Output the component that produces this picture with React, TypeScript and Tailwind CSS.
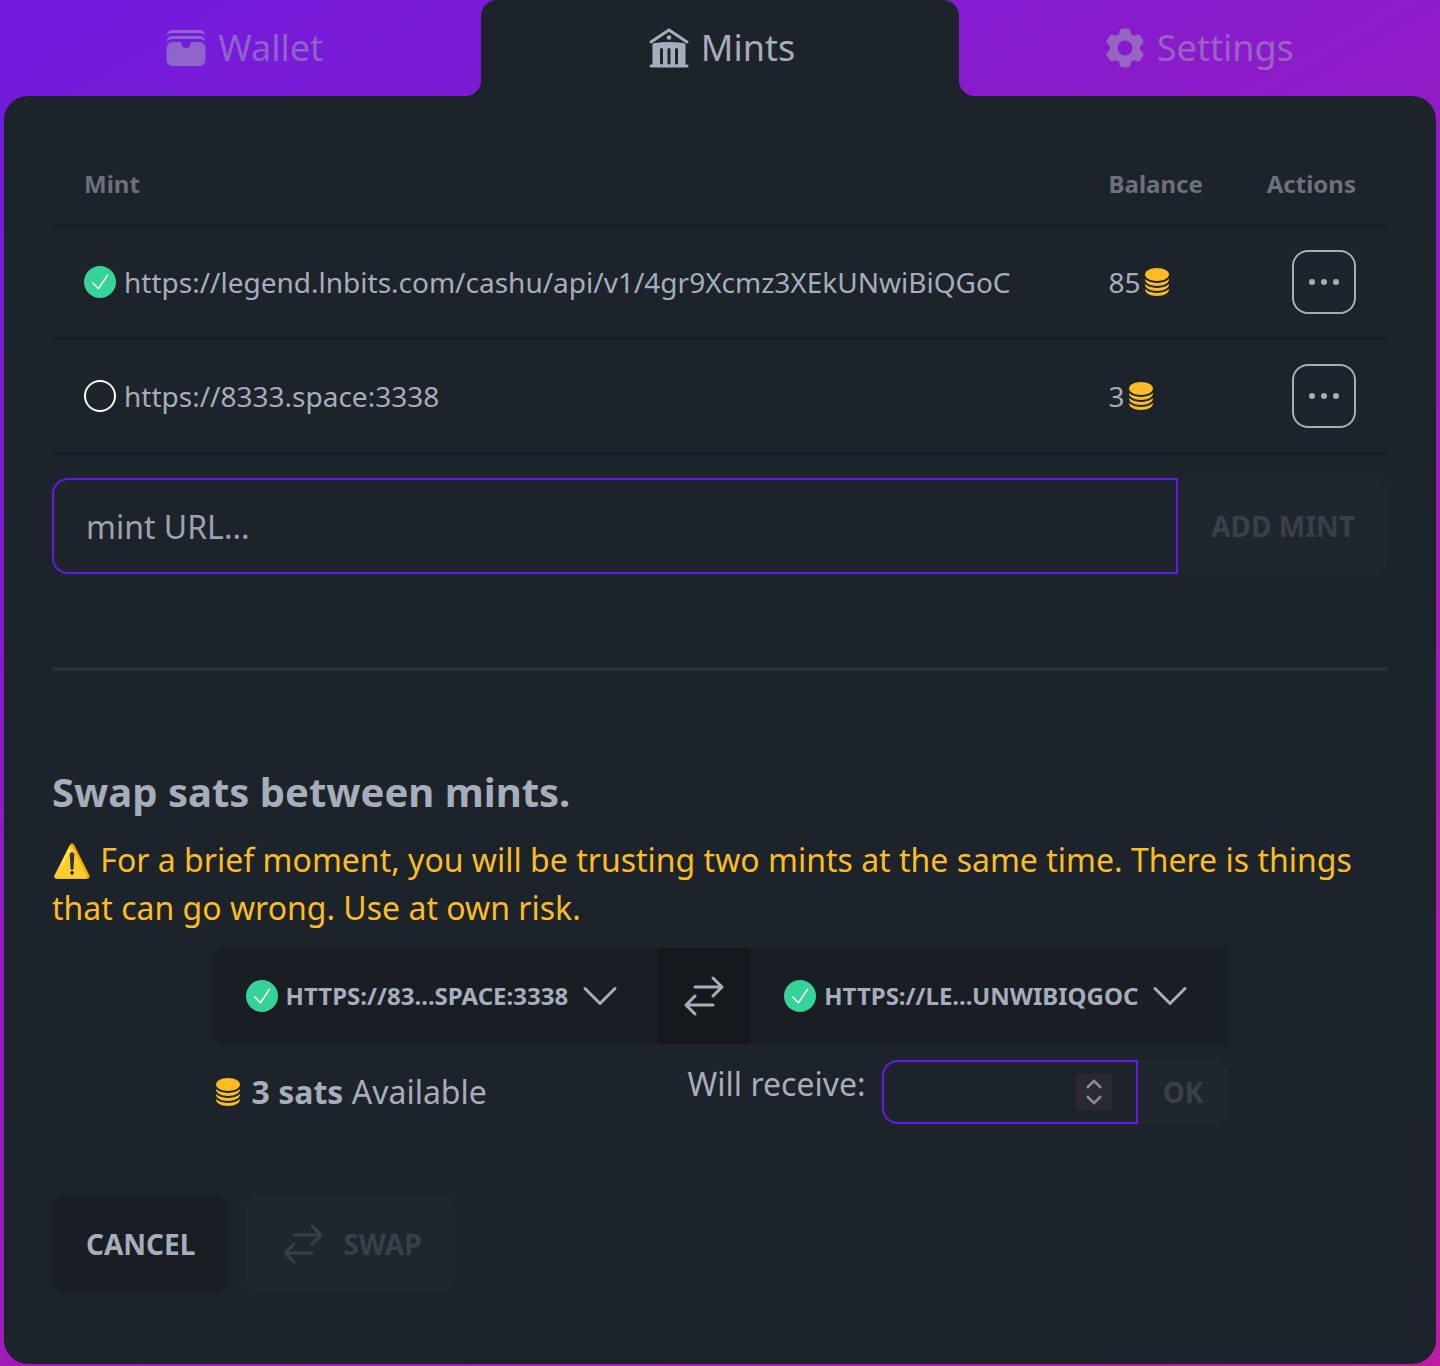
import { useState } from "react";
import {
  HiBuildingLibrary,
  HiCircleStack,
  HiCog6Tooth,
  HiOutlineArrowsRightLeft,
  HiOutlineCheck,
  HiOutlineChevronDown,
  HiOutlineChevronUp,
  HiOutlineEllipsisHorizontal,
  HiWallet,
} from "react-icons/hi2";

interface Mint {
  url: string;
  balance: number;
  active: boolean;
}

const mints: Mint[] = [
  { url: "https://legend.lnbits.com/cashu/api/v1/4gr9Xcmz3XEkUNwiBiQGoC", balance: 85, active: true },
  { url: "https://8333.space:3338", balance: 3, active: false },
];

const tabs = [
  { name: "Wallet", Icon: HiWallet },
  { name: "Mints", Icon: HiBuildingLibrary },
  { name: "Settings", Icon: HiCog6Tooth },
];

function StatusDot({ active }: { active: boolean }) {
  if (!active) {
    return <span className="size-8 shrink-0 rounded-full border-2 border-white" />;
  }
  return (
    <span className="flex size-8 shrink-0 items-center justify-center rounded-full bg-[#36d399] text-white">
      <HiOutlineCheck className="size-6" />
    </span>
  );
}

function MintSelect({ label, className }: { label: string; className: string }) {
  return (
    <button
      type="button"
      className={`flex h-24 items-center gap-2 bg-[#191d24] px-[34px] text-2xl font-bold uppercase ${className}`}
    >
      <StatusDot active />
      {label}
      <HiOutlineChevronDown className="size-12" />
    </button>
  );
}

function Tabs() {
  return (
    <nav className="grid grid-cols-3">
      {tabs.map(({ name, Icon }) => {
        const active = name === "Mints";
        return (
          <a
            key={name}
            href={`#${name.toLowerCase()}`}
            className={`relative flex h-24 items-center justify-center gap-2 text-4xl ${
              active ? "rounded-t-2xl bg-[#1d232a]" : "text-[#a6adbb]/50"
            }`}
          >
            {active && (
              <>
                <span className="absolute bottom-0 -left-4 size-4 bg-[radial-gradient(circle_at_0_0,transparent_16px,#1d232a_16px)]" />
                <span className="absolute bottom-0 -right-4 size-4 bg-[radial-gradient(circle_at_100%_0,transparent_16px,#1d232a_16px)]" />
              </>
            )}
            <Icon className="size-12" />
            {name}
          </a>
        );
      })}
    </nav>
  );
}

function MintTable() {
  return (
    <table className="w-full border-separate border-spacing-0 text-left text-[28px] leading-10">
      <thead>
        <tr className="text-2xl text-[#6b717d] *:border-b-2 *:border-[#191d24]">
          <th className="h-[82px] px-8">Mint</th>
          <th className="px-8">Balance</th>
          <th className="w-px px-8">Actions</th>
        </tr>
      </thead>
      <tbody>
        {mints.map((mint) => (
          <tr key={mint.url} className="*:border-b-2 *:border-[#191d24]">
            <td className="px-8 py-6">
              <div className="flex items-center gap-2">
                <StatusDot active={mint.active} />
                {mint.url}
              </div>
            </td>
            <td className="w-px px-8 py-6">
              <div className="flex items-center">
                {mint.balance}
                <HiCircleStack className="size-8 text-[#fbbd23]" />
              </div>
            </td>
            <td className="px-8 py-6">
              <button
                type="button"
                aria-label="Mint actions"
                className="ml-auto flex size-16 items-center justify-center rounded-2xl border-2 border-[#a6adbb]"
              >
                <HiOutlineEllipsisHorizontal className="size-12" />
              </button>
            </td>
          </tr>
        ))}
      </tbody>
    </table>
  );
}

export default function App() {
  const [mintUrl, setMintUrl] = useState("");
  const [amount, setAmount] = useState("");

  return (
    <div className="min-h-screen bg-[linear-gradient(150deg,#701bde,#bd1ca4)] px-1 pb-0.5 font-['Noto_Sans',sans-serif] text-[#a6adbb]">
      <Tabs />
      <main className="rounded-3xl bg-[#1d232a] px-12 pt-12 pb-18">
        <MintTable />

        <form className="mt-6 flex">
          <input
            type="text"
            aria-label="mint URL"
            placeholder="mint URL..."
            value={mintUrl}
            onChange={(e) => setMintUrl(e.target.value)}
            className="h-24 min-w-0 flex-1 rounded-l-2xl border-2 border-[#661ae6] px-8 text-[32px] outline-none placeholder:text-[#9ca3af]"
          />
          <button
            type="button"
            disabled
            className="h-24 rounded-r-2xl bg-[#20262d] px-[33px] text-[28px] font-bold text-[#3a4049]"
          >
            ADD MINT
          </button>
        </form>

        <hr className="my-[93px] h-1 border-0 bg-[#2a3038]" />

        <h2 className="text-[40px] leading-14 font-bold">Swap sats between mints.</h2>
        <p className="mt-4 text-[32px] leading-12 text-[#fbbd23]">
          ⚠️ For a brief moment, you will be trusting two mints at the same time. There is things that can go
          wrong. Use at own risk.
        </p>

        <div className="mx-auto mt-4 w-fit">
          <div className="flex">
            <MintSelect label="https://83...space:3338" className="rounded-l-2xl" />
            <button
              type="button"
              aria-label="Switch mints"
              className="flex h-24 items-center bg-[#15191e] px-[22px]"
            >
              <HiOutlineArrowsRightLeft className="size-12" />
            </button>
            <MintSelect label="https://le...UNwiBiQGoC" className="" />
          </div>

          <div className="mt-4 flex justify-between text-[32px] leading-12">
            <p className="flex items-center gap-2">
              <HiCircleStack className="size-8 text-[#fbbd23]" />
              <span>
                <strong>3 sats</strong> Available
              </span>
            </p>
            <div className="flex">
              <label htmlFor="amount" className="mr-4">
                Will receive:
              </label>
              <div className="flex h-16 w-64 items-center rounded-l-2xl border-2 border-[#661ae6] px-6">
                <input
                  id="amount"
                  type="text"
                  inputMode="numeric"
                  value={amount}
                  onChange={(e) => setAmount(e.target.value)}
                  className="min-w-0 flex-1 outline-none"
                />
                <span className="flex size-9 flex-col items-center justify-center bg-[#2b2933] text-[#8f8d9b]">
                  <button
                    type="button"
                    aria-label="Increase"
                    className="flex h-4 items-center"
                    onClick={() => setAmount(String(Number(amount) + 1))}
                  >
                    <HiOutlineChevronUp className="size-5" strokeWidth={3} />
                  </button>
                  <button
                    type="button"
                    aria-label="Decrease"
                    className="flex h-4 items-center"
                    onClick={() => setAmount(String(Number(amount) - 1))}
                  >
                    <HiOutlineChevronDown className="size-5" strokeWidth={3} />
                  </button>
                </span>
              </div>
              <button
                type="button"
                disabled
                className="h-16 rounded-r-2xl bg-[#20262d] px-[25px] text-[28px] font-bold text-[#3a4049]"
              >
                OK
              </button>
            </div>
          </div>
        </div>

        <div className="mt-18 flex gap-4 text-[28px] font-bold">
          <button type="button" className="h-24 rounded-2xl bg-[#191d24] px-[34px]">
            CANCEL
          </button>
          <button
            type="button"
            disabled
            className="flex h-24 items-center gap-4 rounded-2xl bg-[#20262d] px-[34px] text-[#3a4049]"
          >
            <HiOutlineArrowsRightLeft className="size-12" />
            SWAP
          </button>
        </div>
      </main>
    </div>
  );
}
